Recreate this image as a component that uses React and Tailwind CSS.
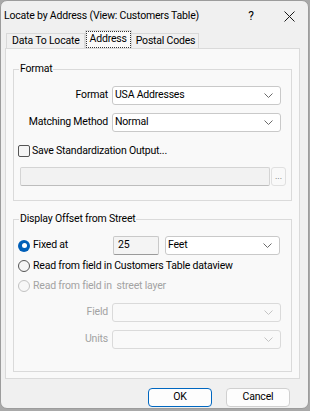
import React from "react";

function Chevron({ disabled }) {
  return (
    <svg width="9" height="5" viewBox="0 0 9 5" className="mr-[7px] shrink-0">
      <path d="M0.5 0.5 L4.5 4.5 L8.5 0.5" stroke={disabled ? "#c4c4c4" : "#6a6a6a"} fill="none" strokeWidth="1" />
    </svg>
  );
}

function Combo({ value, disabled, className }) {
  return (
    <div
      className={
        "h-[19px] flex items-center rounded-[3px] border " +
        (disabled ? "border-[#dadada] bg-[#f9f9f9] " : "border-[#c9c9c9] bg-white ") +
        className
      }
    >
      <span className="flex-1 pl-[2px] leading-none text-black whitespace-nowrap">{value}</span>
      <Chevron disabled={disabled} />
    </div>
  );
}

function Radio({ checked, disabled }) {
  if (checked) {
    return (
      <span className="w-[12px] h-[12px] rounded-full bg-[#005fb8] flex items-center justify-center shrink-0">
        <span className="w-[5px] h-[5px] rounded-full bg-white" />
      </span>
    );
  }
  return (
    <span
      className={
        "w-[12px] h-[12px] rounded-full border shrink-0 " +
        (disabled ? "border-[#c2c2c2] bg-[#f7f7f7]" : "border-[#555555] bg-[#f5f5f5]")
      }
    />
  );
}

export default function App() {
  return (
    <div className="w-[310px] h-[411px] bg-[#a9a9a9] font-['Roboto',sans-serif] text-[10.5px] tracking-[-0.2px] text-black whitespace-nowrap">
      <div className="w-[309px] h-[409px] bg-[#f0f0f0] rounded-[7px] border border-[#9c9c9c] flex flex-col overflow-hidden">
        {/* Title bar */}
        <div className="h-[30px] flex items-center shrink-0">
          <span className="pl-[3px] flex-1 leading-none">Locate by Address (View: Customers Table)</span>
          <span className="w-[14px] text-center mr-[26px] leading-none text-[12px]">?</span>
          <svg width="11" height="11" viewBox="0 0 11 11" className="mr-[13px]">
            <path d="M0.5 0.5 L10.5 10.5 M10.5 0.5 L0.5 10.5" stroke="#1a1a1a" strokeWidth="1" />
          </svg>
        </div>
        {/* Tabs */}
        <div className="h-[17px] flex items-end pl-[5px] shrink-0 relative z-10">
          <div className="h-[15px] pl-[5px] pr-[4px] flex items-center border border-b-0 border-[#d9d9d9] bg-[#f0f0f0] leading-none">
            Data To Locate
          </div>
          <div className="h-[18px] px-0 flex items-center border border-b-0 border-[#d9d9d9] bg-[#f9f9f9] leading-none">
            <span className="border border-dotted border-[#333] px-[3px] py-[2px]">Address</span>
          </div>
          <div className="h-[15px] pl-[4px] pr-[3px] flex items-center border border-b-0 border-l-0 border-[#d9d9d9] bg-[#f0f0f0] leading-none">
            Postal Codes
          </div>
        </div>
        {/* Panel */}
        <div className="ml-[4px] w-[295px] h-[331px] border border-[#dadada] bg-[#f9f9f9] px-[7px] pb-[6px] flex flex-col shrink-0">
          <fieldset className="mt-[12px] border border-[#dadada] h-[140px] flex flex-col px-0">
            <legend className="ml-[5px] px-[1px] leading-[16px]">Format</legend>
            <div className="mt-[9px] flex items-center">
              <span className="w-[94px] text-right leading-none">Format</span>
              <Combo value="USA Addresses" className="ml-[4px] w-[169px]" />
            </div>
            <div className="mt-[8px] flex items-center">
              <span className="w-[94px] text-right leading-none">Matching Method</span>
              <Combo value="Normal" className="ml-[4px] w-[169px]" />
            </div>
            <div className="mt-[11px] h-[16px] flex items-center pl-[4px]">
              <span className="w-[12px] h-[12px] rounded-[2px] border border-[#555555] bg-[#f5f5f5] shrink-0" />
              <span className="ml-[2px] leading-none">Save Standardization Output...</span>
            </div>
            <div className="mt-[8px] flex items-center pl-[6px]">
              <div className="w-[250px] h-[19px] border border-[#d4d4d4] border-b-[#bdbdbd] bg-[#f2f2f2] rounded-[2px]" />
              <div className="ml-[1px] w-[15px] h-[19px] border border-[#e0e0e0] rounded-[3px] bg-[#f9f9f9] flex items-center justify-center text-[9px] text-[#666] leading-none tracking-normal">
                ...
              </div>
            </div>
          </fieldset>
          <fieldset className="mt-[10px] border border-[#dadada] flex-1 flex flex-col px-0">
            <legend className="ml-[5px] px-[1px] leading-[16px]">Display Offset from Street</legend>
            <div className="mt-[9px] h-[19px] flex items-center">
              <div className="w-[99px] pl-[4px] flex items-center">
                <Radio checked />
                <span className="ml-[3px] leading-none">Fixed at</span>
              </div>
              <div className="w-[46px] h-[19px] border border-[#c9c9c9] border-b-[#9a9a9a] bg-[#f4f4f4] rounded-[2px] flex items-center pl-[4px] leading-none">
                25
              </div>
              <Combo value="Feet" className="ml-[6px] w-[115px]" />
            </div>
            <div className="mt-[3px] h-[16px] flex items-center pl-[4px]">
              <Radio />
              <span className="ml-[3px] leading-none">Read from field in Customers Table dataview</span>
            </div>
            <div className="mt-[4px] h-[16px] flex items-center pl-[4px] text-[#a3a3a3]">
              <Radio disabled />
              <span className="ml-[3px] leading-none">Read from field in&nbsp; street layer</span>
            </div>
            <div className="mt-[9px] flex items-center text-[#a3a3a3]">
              <span className="w-[94px] text-right leading-none">Field</span>
              <Combo value="" disabled className="ml-[4px] w-[169px]" />
            </div>
            <div className="mt-[8px] flex items-center text-[#a3a3a3]">
              <span className="w-[94px] text-right leading-none">Units</span>
              <Combo value="" disabled className="ml-[4px] w-[169px]" />
            </div>
          </fieldset>
        </div>
        {/* Footer */}
        <div className="flex justify-end mt-[9px] pr-[18px] gap-[14px]">
          <button className="w-[64px] h-[19px] rounded-[4px] border border-[#0067c0] bg-[#fdfdfd] leading-none">OK</button>
          <button className="w-[64px] h-[19px] rounded-[4px] border border-[#d0d0d0] bg-[#fdfdfd] leading-none">Cancel</button>
        </div>
      </div>
    </div>
  );
}
